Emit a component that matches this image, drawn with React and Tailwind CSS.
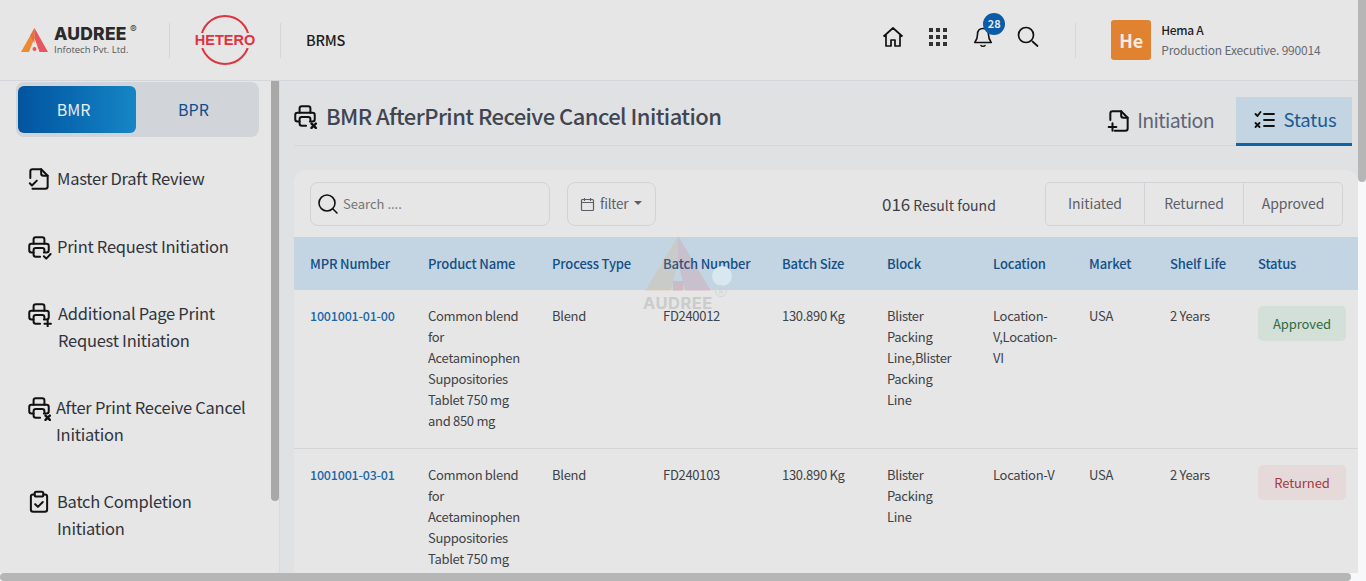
import React from "react";

const Ic = ({ s = 24, className = "", children, w = 1.85, vb = "0 0 24 24" }) => (
  <svg width={s} height={s} viewBox={vb} fill="none" stroke="currentColor" strokeWidth={w} strokeLinecap="round" strokeLinejoin="round" className={"shrink-0 " + className}>
    {children}
  </svg>
);

const PrinterBase = ({ badge }) => (
  <>
    <path d="M16.5 17H19a2 2 0 0 0 2-2v-4a2 2 0 0 0-2-2H5a2 2 0 0 0-2 2v4a2 2 0 0 0 2 2h2" />
    <path d="M17 9V5a2 2 0 0 0-2-2H9a2 2 0 0 0-2 2v4" />
    <path d="M13 21H9a2 2 0 0 1-2-2v-4a2 2 0 0 1 2-2h6a2 2 0 0 1 2 2v1" />
    {badge}
  </>
);

const PrintX = (p) => <Ic {...p}><PrinterBase badge={<path d="M18 19l4 4M22 19l-4 4" strokeWidth="2.2" />} /></Ic>;
const PrintCheck = (p) => <Ic {...p}><PrinterBase badge={<path d="M16.5 20.5l2.2 2.2 4-4.2" />} /></Ic>;
const PrintPlus = (p) => <Ic {...p}><PrinterBase badge={<path d="M20 18v6M17 21h6" />} /></Ic>;
const FileCheck = (p) => (
  <Ic {...p}>
    <path d="M4 11V5a2 2 0 0 1 2-2h8l6 6v10a2 2 0 0 1-2 2H6" />
    <path d="M14 3v4a2 2 0 0 0 2 2h4" />
    <path d="M3.500 16l2 2 4.500-4.500" />
  </Ic>
);
const FilePlus = (p) => (
  <Ic {...p}>
    <path d="M4 11V5a2 2 0 0 1 2-2h8l6 6v10a2 2 0 0 1-2 2H8" />
    <path d="M14 3v4a2 2 0 0 0 2 2h4" />
    <path d="M6 14v7M2.5 17.5h7" />
  </Ic>
);
const ClipCheck = (p) => (
  <Ic {...p}>
    <path d="M8 5H6.5A2 2 0 0 0 4.500 7v12a2 2 0 0 0 2 2h11a2 2 0 0 0 2-2V7a2 2 0 0 0-2-2H16" />
    <rect x="8" y="2.500" width="8" height="4.500" rx="1.500" />
    <path d="M8.500 14l2.500 2.500 4.500-4.500" />
  </Ic>
);

const NAV = [
  { I: FileCheck, label: "Master Draft Review", ml: "ml-[5px]", row: "mb-[1px]" },
  { I: PrintCheck, label: "Print Request Initiation", ml: "ml-[5px]", row: "" },
  { I: PrintPlus, label: "Additional Page Print Request Initiation", ml: "ml-[6px]", row: "" },
  { I: PrintX, label: "After Print Receive Cancel Initiation", ml: "ml-[4px]", row: "" },
  { I: ClipCheck, label: "Batch Completion Initiation", ml: "ml-[5px]", row: "" },
];

const HEAD = ["MPR Number", "Product Name", "Process Type", "Batch Number", "Batch Size", "Block", "Location", "Market", "Shelf Life", "Status"];

const ROWS = [
  { id: "1001001-01-00", name: "Common blend for Acetaminophen Suppositories Tablet 750 mg and 850 mg", type: "Blend", batch: "FD240012", size: "130.890 Kg", block: "Blister Packing Line,Blister Packing Line", loc: "Location-V,Location-VI", status: "Approved" },
  { id: "1001001-03-01", name: "Common blend for Acetaminophen Suppositories Tablet 750 mg and 850 mg", type: "Blend", batch: "FD240103", size: "130.890 Kg", block: "Blister Packing Line", loc: "Location-V", status: "Returned" },
];

const COLS = ["w-[118px]", "w-[124px]", "w-[111px]", "w-[119px]", "w-[105px]", "w-[106px]", "w-[96px]", "w-[81px]", "w-[88px]", "w-[116px]"];

export default function App() {
  return (
    <div className="relative h-[581px] w-[1366px] overflow-hidden bg-[#f7f8fa] font-['Noto_Sans_CJK_SC','Noto_Sans',sans-serif]">
      <div className="flex h-full w-[1358px] flex-col bg-[#e6e6e6]">
        {/* header */}
        <header className="flex h-[81px] shrink-0 items-center border-b border-[#d3d6da] bg-[#e6e6e6]">
          <div className="ml-[21px] flex w-[117px] items-center">
            <svg width="27" height="25" viewBox="0 0 27 25" className="shrink-0 mt-[1px]">
              <path d="M13.500 0L0 24h8L13.500 10z" fill="#ec8a33" />
              <path d="M13.500 0L27 24h-8.500L13.500 10z" fill="#e7555f" />
              <path d="M13.500 0L9 8l4.500 7z" fill="#e8703f" />
              <rect x="11.500" y="19" width="4" height="4" rx="2" fill="#e7555f" />
            </svg>
            <div className="ml-[6px] -mt-[1px] flex flex-col">
              <span className="relative font-['Inter',sans-serif] text-[17.500px] leading-[20px] font-extrabold tracking-[0.2px] whitespace-nowrap text-[#2a2a2a]">
                AUDREE
                <span className="absolute -top-[5px] left-[76px] text-[10px] font-normal text-[#444]">®</span>
              </span>
              <span className="font-['Open_Sans',sans-serif] text-[9.500px] leading-[11px] whitespace-nowrap text-[#555]">Infotech Pvt. Ltd.</span>
            </div>
          </div>
          <div className="ml-[31px] h-[35px] w-px bg-[#d6d6d6]" />
          <div className="relative ml-[25px] flex h-[50px] w-[60px] items-center justify-center rounded-full">
            <div className="absolute left-[5px] top-0 h-[50px] w-[50px] rounded-full border-2 border-[#dd343f]" />
            <span className="relative bg-[#e6e6e6] font-['Liberation_Sans',sans-serif] text-[14.500px] leading-[15px] font-bold text-[#dd343f]">HETERO</span>
          </div>
          <div className="ml-[25px] h-[35px] w-px bg-[#d6d6d6]" />
          <div className="ml-[25px] text-[14.500px] font-medium tracking-[-0.2px] text-[#1d1d1d]">BRMS</div>

          <div className="ml-[537px] flex items-center text-[#111]">
            <svg width="22" height="22" viewBox="0 0 22 22" fill="none" stroke="currentColor" strokeWidth="1.700" strokeLinejoin="round" className="-mt-[7px]">
              <path d="M1.500 10.500L11 2l9.500 8.500M4 8.500V20h5v-6h4v6h5V8.500" />
            </svg>
            <div className="-mt-[7px] ml-[25px] grid grid-cols-3 gap-x-[3px] gap-y-[3px]">
              {Array.from({ length: 9 }).map((_, i) => (
                <div key={i} className="h-[4px] w-[4px] bg-[#333]" />
              ))}
            </div>
            <div className="relative -mt-[7px] ml-[25px] h-[22px] w-[22px]">
              <svg width="22" height="22" viewBox="0 0 22 22" fill="none" stroke="currentColor" strokeWidth="1.600" strokeLinecap="round" strokeLinejoin="round">
                <path d="M11 2.500c-3.500 0-5.500 2.500-5.500 6 0 5-2 7-2.800 8h16.600c-.8-1-2.800-3-2.800-8 0-3.500-2-6-5.500-6z" />
                <path d="M9 19.500c.5 1 3.500 1 4 0" />
              </svg>
              <div className="absolute -top-[13px] left-[11px] flex h-[22px] w-[22px] items-center justify-center rounded-full bg-[#0d5aa7] text-[11px] font-bold text-[#dfe9f3]">28</div>
            </div>
            <svg width="22" height="22" viewBox="0 0 22 22" fill="none" stroke="currentColor" strokeWidth="1.700" strokeLinecap="round" className="-mt-[7px] ml-[23px]">
              <circle cx="9" cy="9" r="7.500" />
              <path d="M15.500 15.500l5 4.500" />
            </svg>
          </div>
          <div className="ml-[36px] h-[35px] w-px bg-[#d6d6d6]" />
          <div className="ml-[35px] flex h-[40px] w-[40px] items-center justify-center rounded-[3px] bg-[#e0822f] text-[18px] font-bold text-[#f3ece4]">He</div>
          <div className="ml-[10px] flex flex-col">
            <span className="text-[12px] leading-[20px] font-medium tracking-[-0.3px] text-[#1f1f1f]">Hema A</span>
            <span className="text-[12px] leading-[20px] tracking-[-0.18px] whitespace-nowrap text-[#666a70]">Production Executive. 990014</span>
          </div>
        </header>

        <div className="flex min-h-0 flex-1">
          {/* sidebar */}
          <aside className="relative w-[280px] shrink-0 overflow-hidden border-r border-[#d9dadc] bg-[#e6e6e6]">
            <div className="absolute top-0 right-0 h-[420px] w-[8px] rounded-b-[4px] bg-[#a8a8a8]" />
            <div className="ml-[16px] mt-[1px] flex h-[55px] w-[243px] items-center rounded-lg bg-[#d1d4d9] pl-[2px]">
              <div className="flex h-[47px] w-[118px] items-center justify-center rounded-md bg-gradient-to-r from-[#03549f] to-[#1685c6] pb-[2px] pr-[7px] text-[16px] text-[#e8edf2]">BMR</div>
              <div className="flex h-[47px] w-[115px] items-center justify-center pb-[2px] text-[16px] text-[#0f4f8c]">BPR</div>
            </div>
            <nav className="mt-[28px] flex w-[262px] flex-col gap-[40px] pl-[26px]">
              {NAV.map(({ I, label, ml, row }) => (
                <div key={label} className={"flex items-start text-[#30343c] " + row}>
                  <I s={26} className="mt-[1px] text-[#111]" />
                  <span className={"text-[16.500px] leading-[27px] tracking-[-0.25px] " + ml}>{label}</span>
                </div>
              ))}
            </nav>
          </aside>

          {/* main */}
          <main className="relative min-w-0 flex-1 bg-[#e0e1e3]">
            <div className="ml-[14px] mr-[6px] mt-[16px] flex h-[49px] items-center border-b border-[#d5d7da]">
              <PrintX s={26} className="text-[#111] -mt-[10px] -ml-[2px]" />
              <h1 className="ml-[8px] -mt-[13px] text-[22px] leading-[30px] font-medium tracking-[-0.55px] text-[#3f4551]">BMR AfterPrint Receive Cancel Initiation</h1>
              <div className="ml-auto flex h-[49px] items-stretch">
                <div className="flex items-center pr-[22px] text-[#5d6675]">
                  <FilePlus s={26} className="text-[#111]" />
                  <span className="ml-[5px] -mt-[2px] text-[19.500px] tracking-[-0.6px]">Initiation</span>
                </div>
                <div className="flex w-[116px] items-center justify-center border-b-[3px] border-[#1163a8] bg-[#c3d5e2] text-[#1d5a92]">
                  <svg width="22" height="22" viewBox="0 0 22 22" fill="none" stroke="#111" strokeWidth="1.800" strokeLinecap="round" strokeLinejoin="round" className="ml-[2px]">
                    <path d="M1.500 5l2 2 3-4M1.500 14l4 4M5.500 14l-4 4M10 5h10M10 11h10M10 17h10" />
                  </svg>
                  <span className="ml-[8px] text-[18.500px] tracking-[-0.2px]">Status</span>
                </div>
              </div>
            </div>

            <div className="ml-[14px] mt-[24px] rounded-t-xl bg-[#e6e6e6]">
              <div className="flex h-[67px] items-start pt-[12px] pl-[16px] pr-[15px]">
                <div className="flex h-[44px] w-[240px] items-center rounded-lg border border-[#d1d3d6] pl-[6px]">
                  <svg width="22" height="22" viewBox="0 0 22 22" fill="none" stroke="#111" strokeWidth="1.600" strokeLinecap="round">
                    <circle cx="10" cy="10" r="8" />
                    <path d="M16 16l4 4" />
                  </svg>
                  <span className="ml-[4px] text-[13px] text-[#757575]">Search ....</span>
                </div>
                <div className="ml-[17px] flex h-[44px] w-[89px] items-center rounded-lg border border-[#d1d3d6] pl-[12px] text-[#5c6066]">
                  <svg width="15" height="15" viewBox="0 0 15 15" fill="none" stroke="currentColor" strokeWidth="1.200">
                    <rect x="1.500" y="2.500" width="12" height="11" rx="1" />
                    <path d="M1.500 5.500h12M4.500 1v3M10.500 1v3" />
                  </svg>
                  <span className="ml-[5px] -mt-[1px] text-[13.500px] tracking-[-0.2px]">filter</span>
                  <span className="ml-[6px] -mt-[2px] h-0 w-0 border-x-[4px] border-t-[4px] border-x-transparent border-t-[#5c6066]" />
                </div>
                <div className="ml-[226px] mt-[9px] flex items-baseline text-[#3d4046]">
                  <span className="text-[17px]">016</span>
                  <span className="ml-[3px] text-[14px]">Result found</span>
                </div>
                <div className="ml-auto flex h-[44px] w-[298px] rounded-[5px] border border-[#d1d3d6] pb-[1px] text-[14px] tracking-[-0.1px] text-[#5c6066]">
                  <div className="flex flex-1 items-center justify-center">Initiated</div>
                  <div className="flex flex-1 items-center justify-center border-l border-[#d1d3d6]">Returned</div>
                  <div className="flex flex-1 items-center justify-center border-l border-[#d1d3d6]">Approved</div>
                </div>
              </div>

              <table className="w-[1064px] table-fixed border-collapse text-[13px] leading-[21px] tracking-[-0.3px] text-[#3f4246]">
                <thead>
                  <tr className="h-[53px] bg-[#c3d5e2]">
                    {HEAD.map((h, i) => (
                      <th key={h} className={"px-[16px] pb-[1px] text-left text-[13px] font-medium tracking-[-0.15px] whitespace-nowrap text-[#144f86] " + COLS[i]}>{h}</th>
                    ))}
                  </tr>
                </thead>
                <tbody>
                  {ROWS.map((r) => (
                    <tr key={r.id} className="border-b border-[#d3d5d8] align-top">
                      <td className="pt-[15px] pb-[17px] pl-[16px] text-[12.500px] font-medium tracking-[-0.2px] text-[#1a66a8]">{r.id}</td>
                      <td className="pt-[15px] pb-[17px] pl-[16px] pr-[16px]">{r.name}</td>
                      <td className="pt-[15px] pb-[17px] px-[16px]">{r.type}</td>
                      <td className="pt-[15px] pb-[17px] px-[16px]">{r.batch}</td>
                      <td className="pt-[15px] pb-[17px] px-[16px]">{r.size}</td>
                      <td className="pt-[15px] pb-[17px] pl-[16px] pr-[22px]">{r.block}</td>
                      <td className="pt-[15px] pb-[17px] px-[16px]">{r.loc}</td>
                      <td className="pt-[15px] pb-[17px] px-[16px]">USA</td>
                      <td className="pt-[15px] pb-[17px] px-[16px]">2 Years</td>
                      <td className="pl-[16px] pt-[16px]">
                        <div className={"flex h-[35px] w-[88px] items-center justify-center rounded-[5px] pb-[1px] text-[13px] tracking-[-0.1px] " + (r.status === "Approved" ? "bg-[#d2e0d7] text-[#2f6b45]" : "bg-[#e6d9da] text-[#a33a42]")}>{r.status}</div>
                      </td>
                    </tr>
                  ))}
                </tbody>
              </table>
            </div>

            {/* watermark */}
            <div className="pointer-events-none absolute left-[362px] top-[154px] h-[80px] w-[100px]">
              <svg width="90" height="60" viewBox="0 0 90 60" className="absolute left-0 top-0">
                <path d="M36 1L3 56h26L36 26z" fill="#ef9a4b" opacity="0.16" />
                <path d="M36 1L69 56H43L36 26z" fill="#e7555f" opacity="0.16" />
                <rect x="31" y="46" width="10" height="10" fill="#e7555f" opacity="0.2" />
              </svg>
              <div className="absolute left-[70px] top-[31px] h-[20px] w-[20px] rounded-full bg-[#d9e7f1]" />
              <div className="absolute left-[73px] top-[50px] flex h-[12px] w-[12px] items-center justify-center rounded-full border border-[#d4d4d4] text-[7px] text-[#cfcfcf]">R</div>
              <span className="absolute left-[1px] top-[59px] font-['Inter',sans-serif] text-[16.500px] leading-[18px] font-bold tracking-[0.5px] text-[#cbcbcb]">AUDREE</span>
            </div>
          </main>
        </div>
      </div>

      {/* page scrollbars */}
      <div className="absolute right-0 top-0 h-[182px] w-[8px] rounded-b-[4px] bg-[#b5b6b5]" />
      <div className="absolute bottom-0 left-0 h-[8px] w-full bg-[#f7f8fa]" />
      <div className="absolute bottom-0 left-0 h-[8px] w-[1351px] rounded-[4px] bg-[#b5b6b5]" />
    </div>
  );
}
